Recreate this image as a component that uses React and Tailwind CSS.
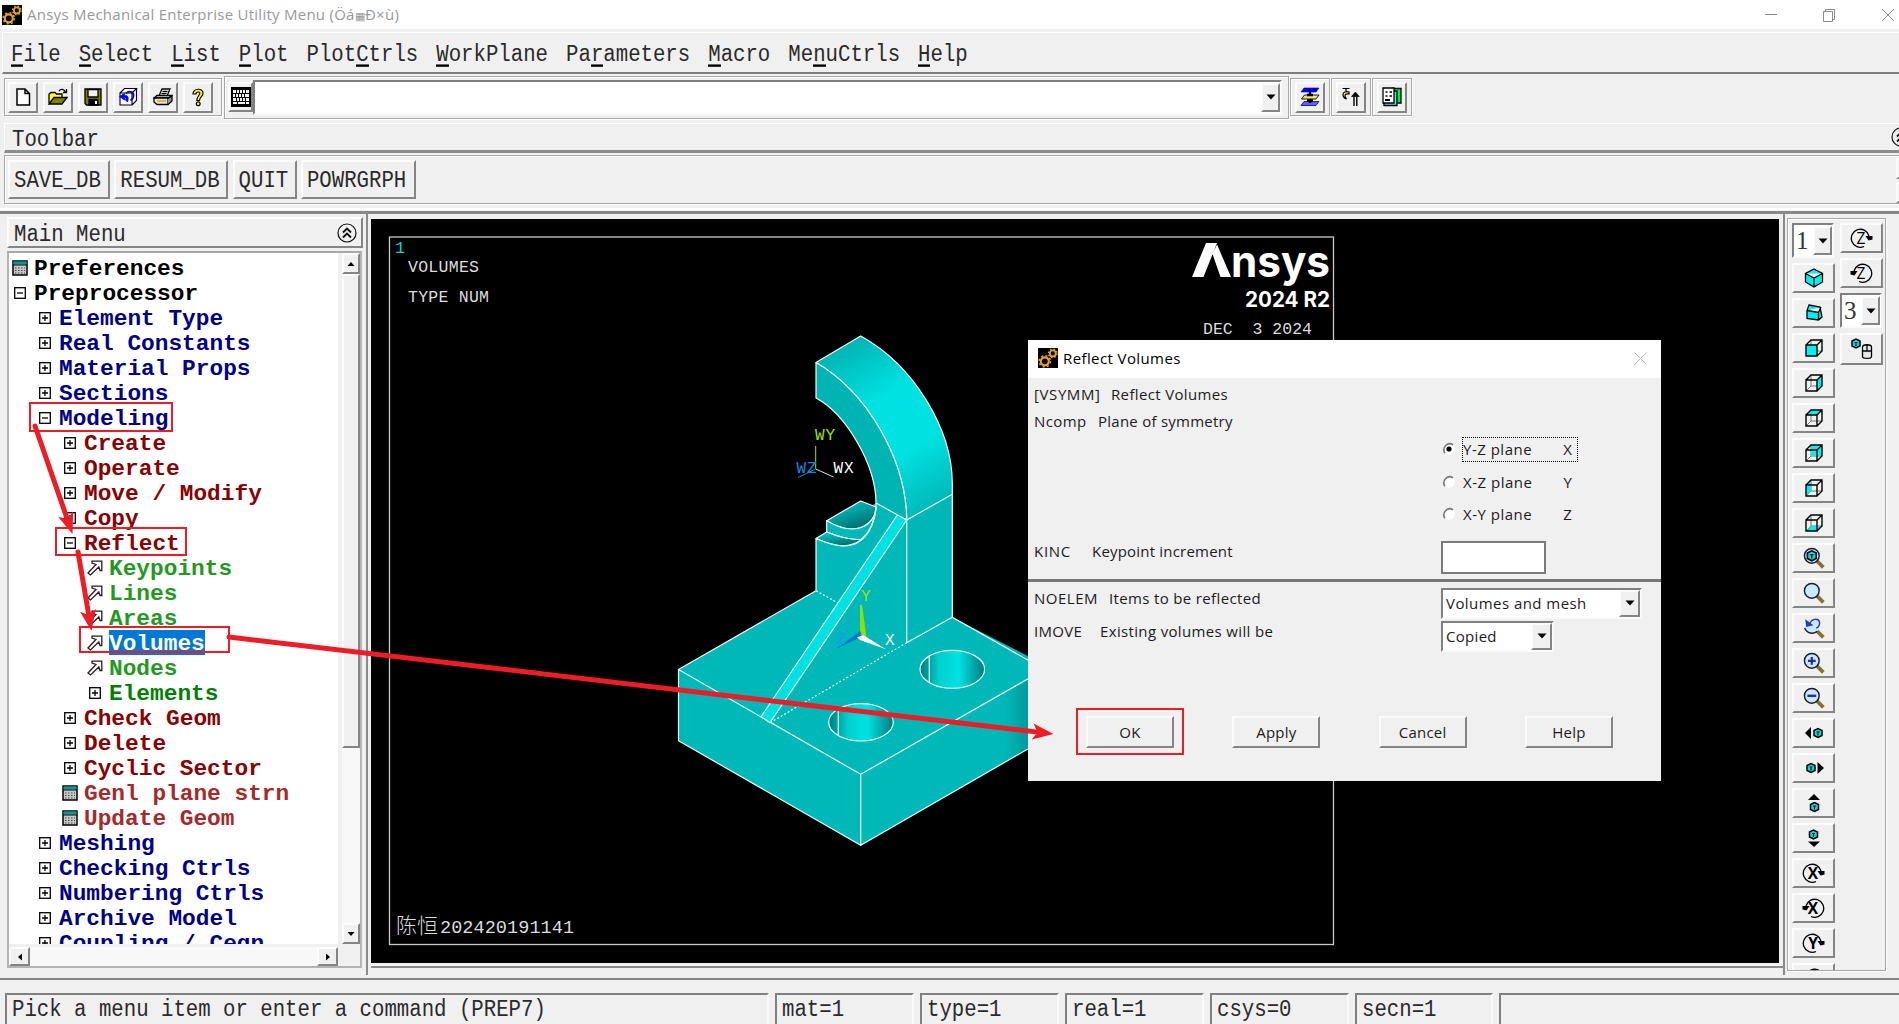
import React from "react";

const MONO = "font-['Liberation_Mono',monospace] whitespace-pre";
const UI = "font-['Open_Sans','Noto_Sans',sans-serif] whitespace-pre";
const RAISED =
  "bg-[#f0f0f0] border-2 border-t-[#fcfcfc] border-l-[#fcfcfc] border-r-[#858585] border-b-[#858585]";
const SUNKEN =
  "border-2 border-t-[#808080] border-l-[#808080] border-r-[#fafafa] border-b-[#fafafa]";
const GROOVE = "border border-[#a8a8a8] shadow-[1px_1px_0_#fff,inset_1px_1px_0_#fff]";

/* Tall monospaced label used by the classic menus and status line */
function Tall({ children, className = "" }) {
  return (
    <span className={`${MONO} inline-block text-[20.7px] leading-[24px] text-[#2a2a2a] origin-center scale-y-[1.18] ${className}`}>
      {children}
    </span>
  );
}

function Gears() {
  return (
    <svg width="20" height="20" viewBox="0 0 20 20" className="shrink-0">
      <rect width="20" height="20" fill="#000" />
      <circle cx="6.8" cy="13.3" r="4" fill="none" stroke="#e5a21c" strokeWidth="2.2" />
      <circle cx="6.8" cy="13.3" r="5.6" fill="none" stroke="#e5a21c" strokeWidth="1.6" strokeDasharray="2 2.4" />
      <circle cx="14.8" cy="5.4" r="3" fill="none" stroke="#e5a21c" strokeWidth="1.8" />
      <circle cx="14.8" cy="5.4" r="4.3" fill="none" stroke="#e5a21c" strokeWidth="1.3" strokeDasharray="1.6 1.8" />
    </svg>
  );
}

function Collapse() {
  return (
    <svg width="20" height="20" viewBox="0 0 20 20" className="shrink-0" fill="none" stroke="#111">
      <circle cx="10" cy="10" r="9" strokeWidth="1.2" />
      <path d="M6 9.5 L10 5.5 L14 9.5 M6 14.5 L10 10.5 L14 14.5" strokeWidth="1.8" />
    </svg>
  );
}

function TitleBar() {
  return (
    <div className="flex h-[29px] shrink-0 items-center bg-white pl-[2px] pr-[5px]">
      <Gears />
      <span className={`${UI} ml-[5px] text-[15px] leading-[20px] text-[#999] tracking-[0.26px]`}>
        Ansys Mechanical Enterprise Utility Menu (Öá<span className="text-[11px]">▦</span>Ð×ù)
      </span>
      <svg className="ml-auto" width="130" height="14" viewBox="0 0 130 14" fill="none" stroke="#8a8a8a">
        <path d="M1 6.5 H13" />
        <path d="M59.5 3.5 H68.5 V13.5 H59.5 Z M61.5 3.5 V1.5 H70.5 V11.5 H68.5" />
        <path d="M118 1 L130 13 M130 1 L118 13" />
      </svg>
    </div>
  );
}

const MENUS = [
  ["", "F", "ile"], ["", "S", "elect"], ["", "L", "ist"], ["", "P", "lot"], ["Plot", "C", "trls"],
  ["", "W", "orkPlane"], ["Pa", "r", "ameters"], ["", "M", "acro"], ["Me", "n", "uCtrls"], ["", "H", "elp"],
];

function MenuBar() {
  return (
    <div className="h-[45px] shrink-0 pl-[2px] pt-[3px]">
      <div className="flex h-[42px] items-center gap-[18px] border-b-2 border-l border-t border-b-[#7d7d7d] border-l-white border-t-white pl-[8px] pt-[5px]">
        {MENUS.map(([a, b, c]) => (
          <Tall key={a + b + c}>
            {a}<span className="border-b-2 border-black inline-block h-[22px] leading-[24px] align-top">{b}</span>{c}
          </Tall>
        ))}
      </div>
    </div>
  );
}

function Tool({ children, className = "h-[31px] w-[30px]" }) {
  return <div className={`flex shrink-0 items-center justify-center ${RAISED} ${className}`}>{children}</div>;
}

const Ico = ({ children, s = 20 }) => (
  <svg width={s} height={s} viewBox="0 0 20 20" fill="none" stroke="#000" strokeWidth="1.3">{children}</svg>
);

function DropArrow({ className = "h-full w-[19px]" }) {
  return (
    <div className={`flex shrink-0 items-center justify-center ${RAISED} ${className}`}>
      <svg width="10" height="6" viewBox="0 0 10 6"><path d="M0.5 0.5 H9.5 L5 5.5 Z" fill="#000" /></svg>
    </div>
  );
}

function StandardBar() {
  return (
    <div className="flex h-[46px] shrink-0 items-center pl-[4px]">
      <div className={`flex h-[38px] w-[218px] items-center gap-[5px] pl-[3px] ${GROOVE}`}>
        <Tool><Ico><path d="M4 2 H12 L16.5 6.5 V18 H4 Z M12 2 V6.5 H16.5" fill="#fff" strokeWidth="1.5" /></Ico></Tool>
        <Tool><Ico>
          <path d="M1 16 V7 L3 5.5 H7 L8.5 7 H14 V10" fill="#ffff30" />
          <path d="M1 17 L6 10.5 H19 L14 17 Z" fill="#808000" />
          <path d="M11 4 C13 1.5 16 2 17.5 5 M18.5 2 V5.5 H15" />
        </Ico></Tool>
        <Tool><Ico>
          <path d="M2 2 H18 V18 H3.5 L2 16.5 Z" fill="#808000" />
          <path d="M5 2.5 H15 V10 H5 Z" fill="#f0f0f0" />
          <path d="M6 12.5 H15 V18 H6 Z" fill="#000" /><path d="M12 14 H14 V17 H12 Z" fill="#fff" stroke="none" />
        </Ico></Tool>
        <Tool><Ico>
          <path d="M2 6 H14 V18 H2 Z M2 6 L6.5 1.5 H18.5 L14 6 M18.5 1.5 V13.5 L14 18" fill="#fff" strokeWidth="1.1" />
          <path d="M1.5 9.5 L6.500 6.500 V8.500 C10 8 11 10.500 9.500 15 L7.500 13 C8.500 11 8 10.500 6.500 10.500 V13 Z" fill="#00f" stroke="#00f" strokeWidth="0.8" />
          <path d="M8 6.500 C11 3 16 5 15.500 9 C15.500 11 14 12.500 12.500 13.500" stroke="#00f" strokeWidth="1.800" />
        </Ico></Tool>
        <Tool><Ico>
          <path d="M6 9 L9 2 H17 L14 9 Z" fill="#fff" /><path d="M9.5 4.5 H14.5 M8.5 6.7 H13.5" />
          <path d="M1 11 L4 8.5 H18.5 L16 11 Z" fill="#ddd" /><path d="M1 11 H15 V17.5 H4 L1 15 Z" fill="#e4e4e4" />
          <path d="M15 17.5 L19 14 V9 L15 11.5" fill="#999" /><path d="M4 14 H13" stroke="#c8b400" strokeWidth="1.6" />
        </Ico></Tool>
        <Tool><Ico>
          <path d="M5 7 C5 1 15.5 0.5 15 6.5 C15 9.5 11.5 10 11.5 13.5 H8.8 C8.5 10 11.5 8.5 11.8 6.5 C12 4.5 8 4.3 8 7 Z" fill="#ffff00" strokeWidth="1.2" />
          <circle cx="10.2" cy="16.8" r="1.9" fill="#ffff00" strokeWidth="1.2" />
        </Ico></Tool>
      </div>
      <div className={`ml-[2px] flex h-[43px] w-[1065px] items-center pl-[3px] ${GROOVE}`}>
        <Tool className="h-[30px] w-[25px]">
          <svg width="20" height="20" viewBox="0 0 20 20" className="shrink-0">
            <rect width="20" height="20" fill="#000" />
            <path fill="#f0f0f0" d="M2 3h3v3H2zM6 3h2v3H6zM9 3h2v3H9zM12 3h2v3h-2zM15 3h3v3h-3zM2 7h2v3H2zM5 7h2v3H5zM8 7h2v3H8zM11 7h2v3h-2zM14 7h4v3h-4zM2 11h3v3H2zM6 11h2v3H6zM9 11h2v3H9zM12 11h2v3h-2zM15 11h3v3h-3zM2 15h4v2H2zM7 15h7v2H7zM15 15h3v2h-3z" />
          </svg>
        </Tool>
        <div className={`flex h-[35px] w-[1029px] justify-end bg-white py-[1px] ${SUNKEN}`}>
          <DropArrow />
        </div>
      </div>
      <div className={`ml-[1px] flex h-[38px] w-[40px] items-center justify-center ${GROOVE}`}>
        <Tool><Ico>
          <path d="M4 1 H19 L16 5 H1 Z" fill="#0000f0" stroke="#0000a0" strokeWidth="0.6" />
          <path d="M4 14.5 H19 L16 18.5 H1 Z" fill="#6060e8" stroke="#0000a0" strokeWidth="0.8" />
          <path d="M4.5 8 H19 L16 12 H1.5 Z" fill="#f0e860" strokeWidth="0.9" />
          <path d="M10 5 V9 M10 12 V16 M7 8 H13 M7 13.500 H13" strokeWidth="2.4" />
        </Ico></Tool>
      </div>
      <div className={`ml-[1px] flex h-[38px] w-[40px] items-center justify-center ${GROOVE}`}>
        <Tool><Ico>
          <path d="M1.500 1.5 H8.500 M5 2 V4 M8 5 C0.500 3 0.500 10 5.500 12 C3 9 3.500 6 8 7 Z" fill="#f8f060" strokeWidth="1.2" />
          <path d="M13 19 V8 M15.8 19 V8" strokeWidth="1.4" /><path d="M10.500 9.5 L14.400 5 L18.3 9.5 Z" fill="#000" strokeWidth="0.6" />
        </Ico></Tool>
      </div>
      <div className={`ml-[1px] flex h-[38px] w-[40px] items-center justify-center ${GROOVE}`}>
        <Tool><Ico>
          <path d="M11 1.500 H19 V16 H11 Z" fill="#00f040" /><path d="M2 4 H15 V18.500 H2 Z" fill="#60e0d8" />
          <path d="M1 1 H12 V16 H1 Z" fill="#fff" /><path d="M3.5 5 H5.5 M7.5 5 H10 M3.5 9 H5.5 M7.5 9 H10" strokeWidth="1.6" />
          <path d="M3 13 H8" strokeWidth="2" />
        </Ico></Tool>
      </div>
    </div>
  );
}

function Abbreviations() {
  return (
    <>
      <div className="mt-[3px] flex h-[30px] shrink-0 items-center border-b-[3px] border-l border-t border-b-[#8d8d8d] border-l-white border-t-white ml-[4px] pl-[7px]">
        <Tall className="relative top-[3px]">Toolbar</Tall>
        <div className="ml-auto w-[8px] overflow-hidden"><Collapse /></div>
      </div>
      <div className={`ml-[4px] mt-[2px] flex h-[49px] shrink-0 items-start overflow-hidden border-r-0 pl-[3px] pt-[4px] ${GROOVE}`}>
        {[["SAVE_DB", "w-[102px]"], ["RESUM_DB", "w-[114px]"], ["QUIT", "w-[64px]"], ["POWRGRPH", "w-[115px]"]].map(([t, w]) => (
          <div key={t} className={`mr-[4.3px] flex h-[39px] items-center pl-[4px] pt-[2px] ${RAISED} ${w}`}>
            <Tall>{t}</Tall>
          </div>
        ))}
        <div className="-mt-[2px] ml-auto flex w-[3px] flex-col gap-[3px] overflow-hidden">
          <div className={`h-[21px] w-[20px] ${RAISED}`} />
          <div className={`h-[21px] w-[20px] ${RAISED}`} />
        </div>
      </div>
    </>
  );
}

const NAVY = "text-[#00008b] font-bold";
const RED = "text-[#8b0000] font-bold";
const GREEN = "text-[#229a22] font-bold";
const BROWN = "text-[#a52a2a] font-bold";
const TREE = [
  ["form", 0, "Preferences", "text-black font-bold"],
  ["minus", 0, "Preprocessor", "text-black font-bold"],
  ["plus", 1, "Element Type", NAVY],
  ["plus", 1, "Real Constants", NAVY],
  ["plus", 1, "Material Props", NAVY],
  ["plus", 1, "Sections", NAVY],
  ["minus", 1, "Modeling", NAVY],
  ["plus", 2, "Create", RED],
  ["plus", 2, "Operate", RED],
  ["plus", 2, "Move / Modify", RED],
  ["plus", 2, "Copy", RED],
  ["minus", 2, "Reflect", RED],
  ["pick", 3, "Keypoints", GREEN],
  ["pick", 3, "Lines", GREEN],
  ["pick", 3, "Areas", GREEN],
  ["pick", 3, "Volumes", "text-white bg-[#0078d7] font-bold"],
  ["pick", 3, "Nodes", GREEN],
  ["plus", 3, "Elements", "text-[#008000] font-bold"],
  ["plus", 2, "Check Geom", RED],
  ["plus", 2, "Delete", RED],
  ["plus", 2, "Cyclic Sector", RED],
  ["form", 2, "Genl plane strn", BROWN],
  ["form", 2, "Update Geom", BROWN],
  ["plus", 1, "Meshing", NAVY],
  ["plus", 1, "Checking Ctrls", NAVY],
  ["plus", 1, "Numbering Ctrls", NAVY],
  ["plus", 1, "Archive Model", NAVY],
  ["plus", 1, "Coupling / Ceqn", NAVY],
];
const INDENT = ["pl-[3px]", "pl-[28px]", "pl-[53px]", "pl-[78px]"];

function TreeIcon({ kind }) {
  if (kind === "form")
    return (
      <svg width="16" height="16" viewBox="0 0 16 16">
        <rect x="1" y="1" width="14" height="14" fill="#c8c8c8" stroke="#000" strokeWidth="1.5" />
        <rect x="1.5" y="1.5" width="13" height="3" fill="#009a9a" />
        <path d="M1 5 H15" stroke="#000" />
        <path d="M3 8 H13 M3 10.5 H13 M3 13 H13" stroke="#444" strokeDasharray="1.5 1.5" />
      </svg>
    );
  if (kind === "pick")
    return (
      <svg width="16" height="16" viewBox="0 0 16 16">
        <path d="M5 1.2 H14.8 V10.500 H13 L11.800 7 L3.500 15 L1 13 L9 4.500 L5 3 Z" fill="#fff" stroke="#2a1c1c" strokeWidth="1.3" />
      </svg>
    );
  return (
    <svg width="12" height="12" viewBox="0 0 12 12" fill="none" stroke="#000">
      <rect x="0.7" y="0.7" width="10.6" height="10.6" strokeWidth="1.3" />
      <path d={kind === "plus" ? "M3 6 H9 M6 3 V9" : "M3 6 H9"} strokeWidth="1.3" />
    </svg>
  );
}

function ScrollButton({ d, className }) {
  return (
    <div className={`flex shrink-0 items-center justify-center ${RAISED} ${className}`}>
      <svg width="8" height="8" viewBox="0 0 8 8"><path d={d} fill="#000" /></svg>
    </div>
  );
}

function MainMenu() {
  return (
    <div className="flex w-[366px] shrink-0 flex-col pl-[7px] pt-[3px]">
      <div className={`flex h-[31px] w-[356px] items-center justify-between pl-[5px] pr-[4px] ${RAISED}`}>
        <Tall className="relative top-[2px]">Main Menu</Tall>
        <Collapse />
      </div>
      <div className="mt-[3px] h-[717px] w-[355px] border-2 border-[#b4b4b4] border-t-[#a8a8a8] bg-[#f0f0f0]">
        <div className="flex h-[691px]">
          <div className="w-[329px] overflow-hidden bg-white pt-[2px]">
            {TREE.map(([kind, level, text, color]) => (
              <div key={text} className={`flex h-[25px] items-center ${INDENT[level]}`}>
                <span className="flex w-[16px] shrink-0 justify-center"><TreeIcon kind={kind} /></span>
                <span className={`${MONO} ml-[6px] h-[25px] text-[22.8px] leading-[28px] ${color}`}>{text}</span>
              </div>
            ))}
          </div>
          <div className="ml-[4px] flex w-[18px] flex-col bg-[#f8f8f8]">
            <ScrollButton d="M0.5 6 H7.5 L4 2 Z" className="h-[21px] w-[18px]" />
            <div className={`h-[474px] w-[18px] ${RAISED}`} />
            <ScrollButton d="M0.5 2 H7.5 L4 6 Z" className="mt-auto h-[21px] w-[18px]" />
          </div>
        </div>
        <div className="mt-[3px] flex h-[19px] w-[329px] justify-between bg-[#f8f8f8]">
          <ScrollButton d="M6 0.5 V7.5 L2 4 Z" className="h-[19px] w-[21px]" />
          <ScrollButton d="M2 0.5 V7.5 L6 4 Z" className="h-[19px] w-[21px]" />
        </div>
      </div>
    </div>
  );
}

function Viewport() {
  const t = "'Liberation Mono', monospace";
  const logo = "Inter, sans-serif";
  return (
    <svg width="1408" height="744" viewBox="371 219 1408 744" className="block shrink-0">
      <defs>
        <linearGradient id="arch" gradientUnits="userSpaceOnUse" x1="835" y1="350" x2="932" y2="512">
          <stop offset="0" stopColor="#00b4b4" /><stop offset="0.35" stopColor="#00e2e2" />
          <stop offset="0.65" stopColor="#00e2e2" /><stop offset="1" stopColor="#00b6b6" />
        </linearGradient>
        <linearGradient id="hole"><stop offset="0" stopColor="#007c7c" /><stop offset="0.3" stopColor="#00d0d0" /><stop offset="0.6" stopColor="#00e2e2" /><stop offset="1" stopColor="#007c7c" /></linearGradient>
        <linearGradient id="cup" x1="0" y1="0" x2="0.6" y2="1"><stop offset="0.2" stopColor="#00c0c0" /><stop offset="1" stopColor="#007070" /></linearGradient>
        <linearGradient id="side"><stop offset="0.8" stopColor="#00b8b8" /><stop offset="1" stopColor="#008c8c" /></linearGradient>
      </defs>
      <rect x="371" y="219" width="1408" height="744" fill="#000" />
      <rect x="389.5" y="237" width="944" height="707.5" fill="none" stroke="#c8c8c8" strokeWidth="1.3" />

      <g fontFamily={t} fontSize="16.5" fill="#dcdcdc">
        <text x="395" y="252.5" fill="#00d8d8" fontSize="17">1</text>
        <text x="408" y="271.5" textLength="71">VOLUMES</text>
        <text x="408" y="301.5" textLength="81">TYPE NUM</text>
        <text x="1203" y="334" textLength="109" style={{ whiteSpace: "pre" }}>DEC  3 2024</text>
        <text x="396" y="933" fontSize="21" fontFamily="'Noto Sans CJK SC', sans-serif" fontWeight="300">陈恒</text>
        <text x="440" y="933" fontSize="18.5" textLength="134">202420191141</text>
      </g>

      <g fill="#fff" fontFamily={logo}>
        <path d="M1192 277 L1206 243 H1217 L1203.5 277 Z M1212.5 254 L1217 244.5 L1231 277 H1220.5 Z" />
        <text x="1231" y="277" fontSize="43" fontWeight="700" textLength="99" lengthAdjust="spacingAndGlyphs">nsys</text>
        <text x="1245" y="306.5" fontSize="21.5" fontWeight="700" textLength="85" lengthAdjust="spacingAndGlyphs">2024 R2</text>
      </g>

      <g stroke="#e8ffff" strokeWidth="1.2" strokeLinejoin="round">
        <path d="M678.5 669.5 L816 590.7 L952.3 617.3 L1110 708 L860.7 774.3 Z" fill="#00b8b8" stroke="none" />
        <path d="M952.3 617.3 L1125 706 L860.7 774.3 L770 722 Z" fill="#00b8b8" stroke="none" />
        <path d="M678.5 669.5 L860.7 774.3 V845.3 L678.5 740.7 Z" fill="#00b8b8" />
        <path d="M860.7 774.3 L1040 672 V742 L860.7 845.3 Z" fill="url(#side)" />
        <path d="M952.3 617.3 L1040 667" fill="none" />
        <path d="M678.5 669.5 L816 590.7" fill="none" />
        <path d="M816 538 V590.7 L838 603 L770 722.7 L906.7 643 V622.7 L952.3 617.3 V494 L876 503 L850 520 Z" fill="#00b8b8" stroke="none" />
        <path d="M906.7 520 L952.3 494.3 V617.3 L906.7 642.7 Z" fill="#00b6b6" stroke="none" />
        <path d="M816 590.7 L838 603 M906.7 642.7 L770 722.7" strokeDasharray="2 2" fill="none" />
        <path d="M906.7 520 V642.7 L952.3 617.3 V494.3" fill="none" />

        <path d="M826.7 520.7 L860.7 501 L876 507 C876 519 866 529 852 529 C842 529 834 525 826.7 520.7 Z" fill="url(#cup)" />
        <path d="M826.7 520.7 C834 525 842 529 852 529 C866 529 876 519 876 507 C875 522 868 535 860 540 C848 540 838 536 826.7 532 Z" fill="#00b8b8" />
        <path d="M816 538.5 L826.7 532 C838 537 848 540 862 539.5 C850 548 838 548 816 538.5 Z" fill="url(#cup)" />
        <path d="M816 590.7 V538.5 C838 548 850 548 860 541 C870 534 876 520 876 503" fill="none" />

        <path d="M816 362.5 L860.7 336 C915 366 952 430 952.3 483 V494.3 L906.7 520 C906 460 868 393 816 362.5 Z" fill="url(#arch)" />
        <path d="M816 362.5 C868 393 906 460 906.7 520 L876 503 C876 465 846 414 816 398 Z" fill="#00b4b4" />
        <path d="M897.3 515 L906.7 520 L770 722.7 L761 716.7 Z" fill="#00e2e2" />
        <ellipse cx="952.3" cy="669.3" rx="32.3" ry="19" fill="url(#hole)" />
        <ellipse cx="861" cy="722.3" rx="32.3" ry="18.7" fill="url(#hole)" />
        <path d="M929.3 656 V682.5 M838.3 709 V735.5" fill="none" />
      </g>

      <g fontFamily={t} fontSize="16">
        <path d="M815.7 446 V469" stroke="#9be600" /><path d="M815.7 469 L833.5 477" stroke="#ddd" /><path d="M815.7 469 L798 477.5" stroke="#0a8ce0" />
        <text x="815" y="440" fill="#9be600" textLength="20">WY</text>
        <text x="796.5" y="473" fill="#0a8ce0" textLength="20">WZ</text>
        <text x="833.5" y="473" fill="#fff" textLength="20">WX</text>
        <path d="M860 605 H862 L866.5 637.5 L860 633.5 Z" fill="#8ee000" />
        <path d="M835.5 649 L860.5 631 L861.5 637 Z" fill="#0a7ad0" />
        <path d="M857 637.5 L863 635 L886.5 649.5 L860 640 Z" fill="#fff" />
        <text x="861" y="600.5" fill="#9be600">Y</text>
        <text x="836" y="643.5" fill="#0a9cff">Z</text>
        <text x="885" y="644.5" fill="#fff">X</text>
      </g>
    </svg>
  );
}

/* Wire cube whose highlighted face is given by `face` */
const FACES = {
  front: "M2 7 H13 V18 H2 Z",
  right: "M13 7 L18 2 V13 L13 18 Z",
  top: "M2 7 L7 2 H18 L13 7 Z",
  back: "M7 2 H18 V13 H7 Z",
  left: "M2 7 L7 2 V13 L2 18 Z",
  bottom: "M2 18 L7 13 H18 L13 18 Z",
};
const Cube = ({ face }) => (
  <Ico>
    <path d="M7 2 V13 H18 M7 13 L2 18" stroke="#777" strokeWidth="1" />
    <path d={FACES[face]} fill="#00f0f0" stroke="none" />
    <path d="M2 7 H13 V18 H2 Z M2 7 L7 2 H18 V13 L13 18 M13 7 L18 2" strokeWidth="1.4" />
  </Ico>
);
const Handle = () => <path d="M12.5 12.5 L18.5 18.5" stroke="#8a7030" strokeWidth="3.4" />;
const Lens = ({ children }) => (
  <Ico s={22}>
    <Handle />
    <circle cx="8" cy="8" r="6.7" fill="#c8e8ff" stroke="#1a1a2a" strokeWidth="1.3" />
    {children}
  </Ico>
);
const MiniCube = ({ x, y }) => (
  <g transform={`translate(${x} ${y})`}>
    <path d="M0 2 L4 0 L8 2 V7 L4 9 L0 7 Z" fill="#00e0e0" strokeWidth="1.5" />
    <path d="M2.5 3.5 H5.5 M4 3.5 V7" strokeWidth="1.2" />
  </g>
);
const Spin = ({ axis, flip }) => (
  <svg width="23" height="22" viewBox="0 0 23 22" fill="none" stroke="#000" strokeWidth="1.3">
    <g transform={flip ? "translate(23 0) scale(-1 1)" : undefined}>
      <path d="M19 9 A9 9 0 1 0 14 19.500" />
      <path d="M15.5 9 H22.5 V12.5 L18.5 13.5 Z" fill="#000" stroke="none" />
    </g>
    <text x="11" y="16.5" textAnchor="middle" fontSize="15.5" fontFamily="'Open Sans', sans-serif" fontWeight={axis === "Z" ? 400 : 700} fill="#000" stroke="none">{axis}</text>
  </svg>
);

const VIEW_TOOLS = [
  <Ico key="iso"><path d="M10 1 L18.5 5.5 V14 L10 19 L1.5 14 V5.5 Z M1.5 5.5 L10 10 L18.5 5.5 M10 10 V19" fill="#00f0f0" /></Ico>,
  <Ico key="obl"><path d="M5 2 L16 4 L18 14 L14.500 17 L3 15.500 V7.500 Z M3 7.500 L14.500 9.500 L17 4 M14.500 9.500 V17" fill="#00f0f0" /></Ico>,
  <Cube key="f" face="front" />, <Cube key="r" face="right" />, <Cube key="t" face="top" />,
  <Cube key="b" face="back" />, <Cube key="l" face="left" />, <Cube key="bo" face="bottom" />,
  <Lens key="fit"><MiniCube x={4} y={3.5} /></Lens>,
  <Lens key="zoom" />,
  <Ico key="prev" s={22}>
    <Handle />
    <path d="M1.500 9 C3 15 10 16.500 13.500 12.500 C16 9 15 2 10 1.500 L3 4 Z" fill="#c8e8ff" stroke="none" />
    <path d="M1.500 10 C3.500 15 9.500 16 13 13" stroke="#1a1a2a" />
    <path d="M6 6.500 C8 1 14 1 15 4.500 C15.500 7 14 9.500 12 10" stroke="#2a3ab0" />
    <path d="M2 2 L3 9 L9.500 7.500 Z" fill="#2a3ab0" stroke="none" />
  </Ico>,
  <Lens key="in"><path d="M4.5 8 H11.5 M8 4.5 V11.5" stroke="#2a2a9a" strokeWidth="2" /></Lens>,
  <Lens key="out"><path d="M4 8 H12" stroke="#2a2a9a" strokeWidth="2.2" /></Lens>,
  <Ico key="pl"><path d="M7 4 V16 L1 10 Z" fill="#000" stroke="none" /><MiniCube x={10} y={5.5} /></Ico>,
  <Ico key="pr"><path d="M13.5 4 V16 L20 10 Z" fill="#000" stroke="none" /><MiniCube x={3} y={5.5} /></Ico>,
  <Ico key="pu"><path d="M4 7 H16 L10 1 Z" fill="#000" stroke="none" /><MiniCube x={6.5} y={9.5} /></Ico>,
  <Ico key="pd"><path d="M4 13.5 H16 L10 19 Z" fill="#000" stroke="none" /><MiniCube x={5.5} y={2} /></Ico>,
  <Spin key="x1" axis="X" />, <Spin key="x2" axis="X" flip />, <Spin key="y1" axis="Y" />, <Spin key="y2" axis="Y" flip />,
];

function NumberSelect({ value }) {
  return (
    <div className={`flex h-[35px] w-[42px] shrink-0 items-stretch justify-between bg-white ${SUNKEN}`}>
      <span className="pl-[2px] pt-[2px] font-['Liberation_Serif',serif] text-[25px] leading-[28px] text-[#333]">{value}</span>
      <DropArrow className="my-[1px] w-[19px]" />
    </div>
  );
}

function ViewBar() {
  const box = "h-[30px] w-[43px]";
  return (
    <div className="flex w-[113px] shrink-0 pl-[2px] pt-[4px]">
      <div className={`flex h-[753px] w-[99px] gap-[5px] overflow-hidden pl-[4px] pt-[4px] ${GROOVE}`}>
        <div className="flex flex-col gap-[5px]">
          <NumberSelect value="1" />
          <div className="flex flex-col gap-[5px]">
            {VIEW_TOOLS.map((icon) => <Tool key={icon.key} className={box}>{icon}</Tool>)}
          </div>
        </div>
        <div className="flex flex-col gap-[5px]">
          <Tool className={box}><Spin axis="Z" /></Tool>
          <Tool className={box}><Spin axis="Z" flip /></Tool>
          <NumberSelect value="3" />
          <Tool className="h-[32px] w-[43px]">
            <svg width="22" height="22" viewBox="0 0 22 22" fill="none" stroke="#000" strokeWidth="1.3">
              <MiniCube x={1} y={1} />
              <path d="M11.500 9 C11.500 6 20.500 6 20.500 9 V18.500 C20.500 21 11.500 21 11.500 18.500 Z M11.500 13 H20.500 M16 6.5 V13" fill="#e8e8e8" />
            </svg>
          </Tool>
        </div>
      </div>
    </div>
  );
}

function StatusBar() {
  return (
    <div className="mt-auto flex h-[46px] shrink-0 flex-col border-t-2 border-[#868686]">
      <div className="mt-[13px] flex gap-[6px] pl-[5px]">
        {[
          ["Pick a menu item or enter a command (PREP7)", "w-[764px]"],
          ["mat=1", "w-[139px]"], ["type=1", "w-[139px]"], ["real=1", "w-[139px]"],
          ["csys=0", "w-[139px]"], ["secn=1", "w-[138px]"], ["", "w-[404px]"],
        ].map(([t, w]) => (
          <div key={w + t} className={`flex h-[33px] shrink-0 items-center pl-[5px] ${SUNKEN} ${w}`}>
            <Tall>{t}</Tall>
          </div>
        ))}
      </div>
    </div>
  );
}

function Radio({ label, axis, on }) {
  return (
    <div className="flex h-[32.5px] items-center">
      <svg width="14" height="14" viewBox="0 0 14 14" className="ml-[414px]">
        <circle cx="7" cy="7" r="6" fill="#fff" />
        <path d="M11 2.7 A6 6 0 0 0 3 11.3" fill="none" stroke="#777" strokeWidth="1.6" />
        {on && <circle cx="7" cy="7" r="2.6" fill="#000" />}
      </svg>
      <div className={`ml-[6px] flex h-[25px] w-[116px] items-center justify-between border border-dotted pr-[5px] ${on ? "border-black" : "border-transparent"}`}>
        <span className="tracking-[0.5px]">{label}</span>
        <span>{axis}</span>
      </div>
    </div>
  );
}

function Dialog() {
  return (
    <div className={`absolute left-[1028px] top-[340px] flex h-[441px] w-[633px] flex-col bg-[#f0f0f0] text-[15px] leading-[20px] tracking-[0.2px] text-[#1c1c1c] ${UI}`}>
      <div className="flex h-[38px] shrink-0 items-center bg-white pb-[2px] pl-[10px] pr-[14px] text-black">
        <Gears />
        <span className="ml-[5px] tracking-[0.4px]">Reflect Volumes</span>
        <svg className="ml-auto" width="13" height="13" viewBox="0 0 13 13" stroke="#bbb"><path d="M0.5 0.5 L12.5 12.5 M12.5 0.5 L0.5 12.5" /></svg>
      </div>
      <div className="flex h-[26px] items-end pl-[6px]"><span className="w-[77px] tracking-[0.6px]">[VSYMM]</span><span className="tracking-[0.35px]">Reflect Volumes</span></div>
      <div className="flex h-[27px] items-end pl-[6px]"><span className="w-[64px] tracking-[0.4px]">Ncomp</span><span className="tracking-[0.25px]">Plane of symmetry</span></div>
      <div className="mt-[2px]">
        <Radio label="Y-Z plane" axis="X" on />
        <Radio label="X-Z plane" axis="Y" />
        <Radio label="X-Y plane" axis="Z" />
      </div>
      <div className="mt-[10px] flex h-[33px] pl-[6px]">
        <span className="w-[58px] tracking-[0.7px]">KINC</span><span className="w-[349px]">Keypoint increment</span>
        <div className="h-[33px] w-[105px] border-2 border-[#7a7a7a] bg-white" />
      </div>
      <div className="mt-[5px] h-[3px] shrink-0 bg-[#767676]" />
      <div className="mt-[6px] flex h-[33px] pl-[6px]">
        <span className="w-[75px] tracking-[0.5px]">NOELEM</span><span className="w-[332px] tracking-[0.35px]">Items to be reflected</span>
        <div className={`flex h-[31px] w-[201px] items-center justify-between bg-white pl-[3px] ${SUNKEN}`}>
          <span className="tracking-[0.45px]">Volumes and mesh</span><DropArrow className="h-[27px] w-[21px]" />
        </div>
      </div>
      <div className="flex h-[33px] pl-[6px]">
        <span className="w-[66px] tracking-[0.3px]">IMOVE</span><span className="w-[341px] tracking-[0.35px]">Existing volumes will be</span>
        <div className={`flex h-[31px] w-[113px] items-center justify-between bg-white pl-[3px] ${SUNKEN}`}>
          <span className="tracking-[0.3px]">Copied</span><DropArrow className="h-[27px] w-[21px]" />
        </div>
      </div>
      <div className="mt-[62px] flex gap-[58.3px] pl-[58px]">
        {["OK", "Apply", "Cancel", "Help"].map((b) => (
          <div key={b} className={`flex h-[32px] w-[88px] items-center justify-center ${RAISED}`}>{b}</div>
        ))}
      </div>
    </div>
  );
}

function Arrow({ x1, y1, x2, y2 }) {
  const len = Math.hypot(x2 - x1, y2 - y1);
  const angle = (Math.atan2(y2 - y1, x2 - x1) * 180) / Math.PI;
  return (
    <g transform={`translate(${x1} ${y1}) rotate(${angle})`}>
      <path d={`M0 0 H${len - 14}`} stroke="#ee1c25" strokeWidth="5" strokeLinecap="round" />
      <path d={`M${len} 0 L${len - 21} -8 L${len - 16} 0 L${len - 21} 8 Z`} fill="#ee1c25" />
    </g>
  );
}

function Annotations() {
  return (
    <svg className="pointer-events-none absolute left-0 top-0" width="1899" height="1024" viewBox="0 0 1899 1024">
      <g fill="none" stroke="#ee1c25" strokeWidth="2">
        <rect x="30" y="403" width="142" height="28" />
        <rect x="56" y="528" width="130" height="27" />
        <rect x="80" y="627" width="149" height="25" />
        <rect x="1077" y="709" width="106" height="45" />
      </g>
      <Arrow x1={35} y1={426} x2={72.5} y2={534} />
      <Arrow x1={78} y1={552} x2={91.5} y2={631} />
      <Arrow x1={229} y1={637} x2={1053.5} y2={734} />
    </svg>
  );
}

export default function App() {
  return (
    <div className="relative flex h-[1024px] w-[1899px] flex-col overflow-hidden bg-[#f0f0f0]">
      <TitleBar />
      <MenuBar />
      <StandardBar />
      <Abbreviations />
      <div className="mt-[4px] h-[6px] shrink-0 border-b-[3px] border-t-2 border-b-[#888] border-t-white" />
      <div className="flex h-[761px] shrink-0">
        <MainMenu />
        <div className="w-[1419px] shrink-0 border-x-2 border-[#8a8a8a] pl-[3px] pt-[5px]">
          <Viewport />
          <div className="mt-[2px] h-[3px] border-b-2 border-t border-b-[#8a8a8a] border-t-white" />
        </div>
        <ViewBar />
      </div>
      <StatusBar />
      <Dialog />
      <Annotations />
    </div>
  );
}
